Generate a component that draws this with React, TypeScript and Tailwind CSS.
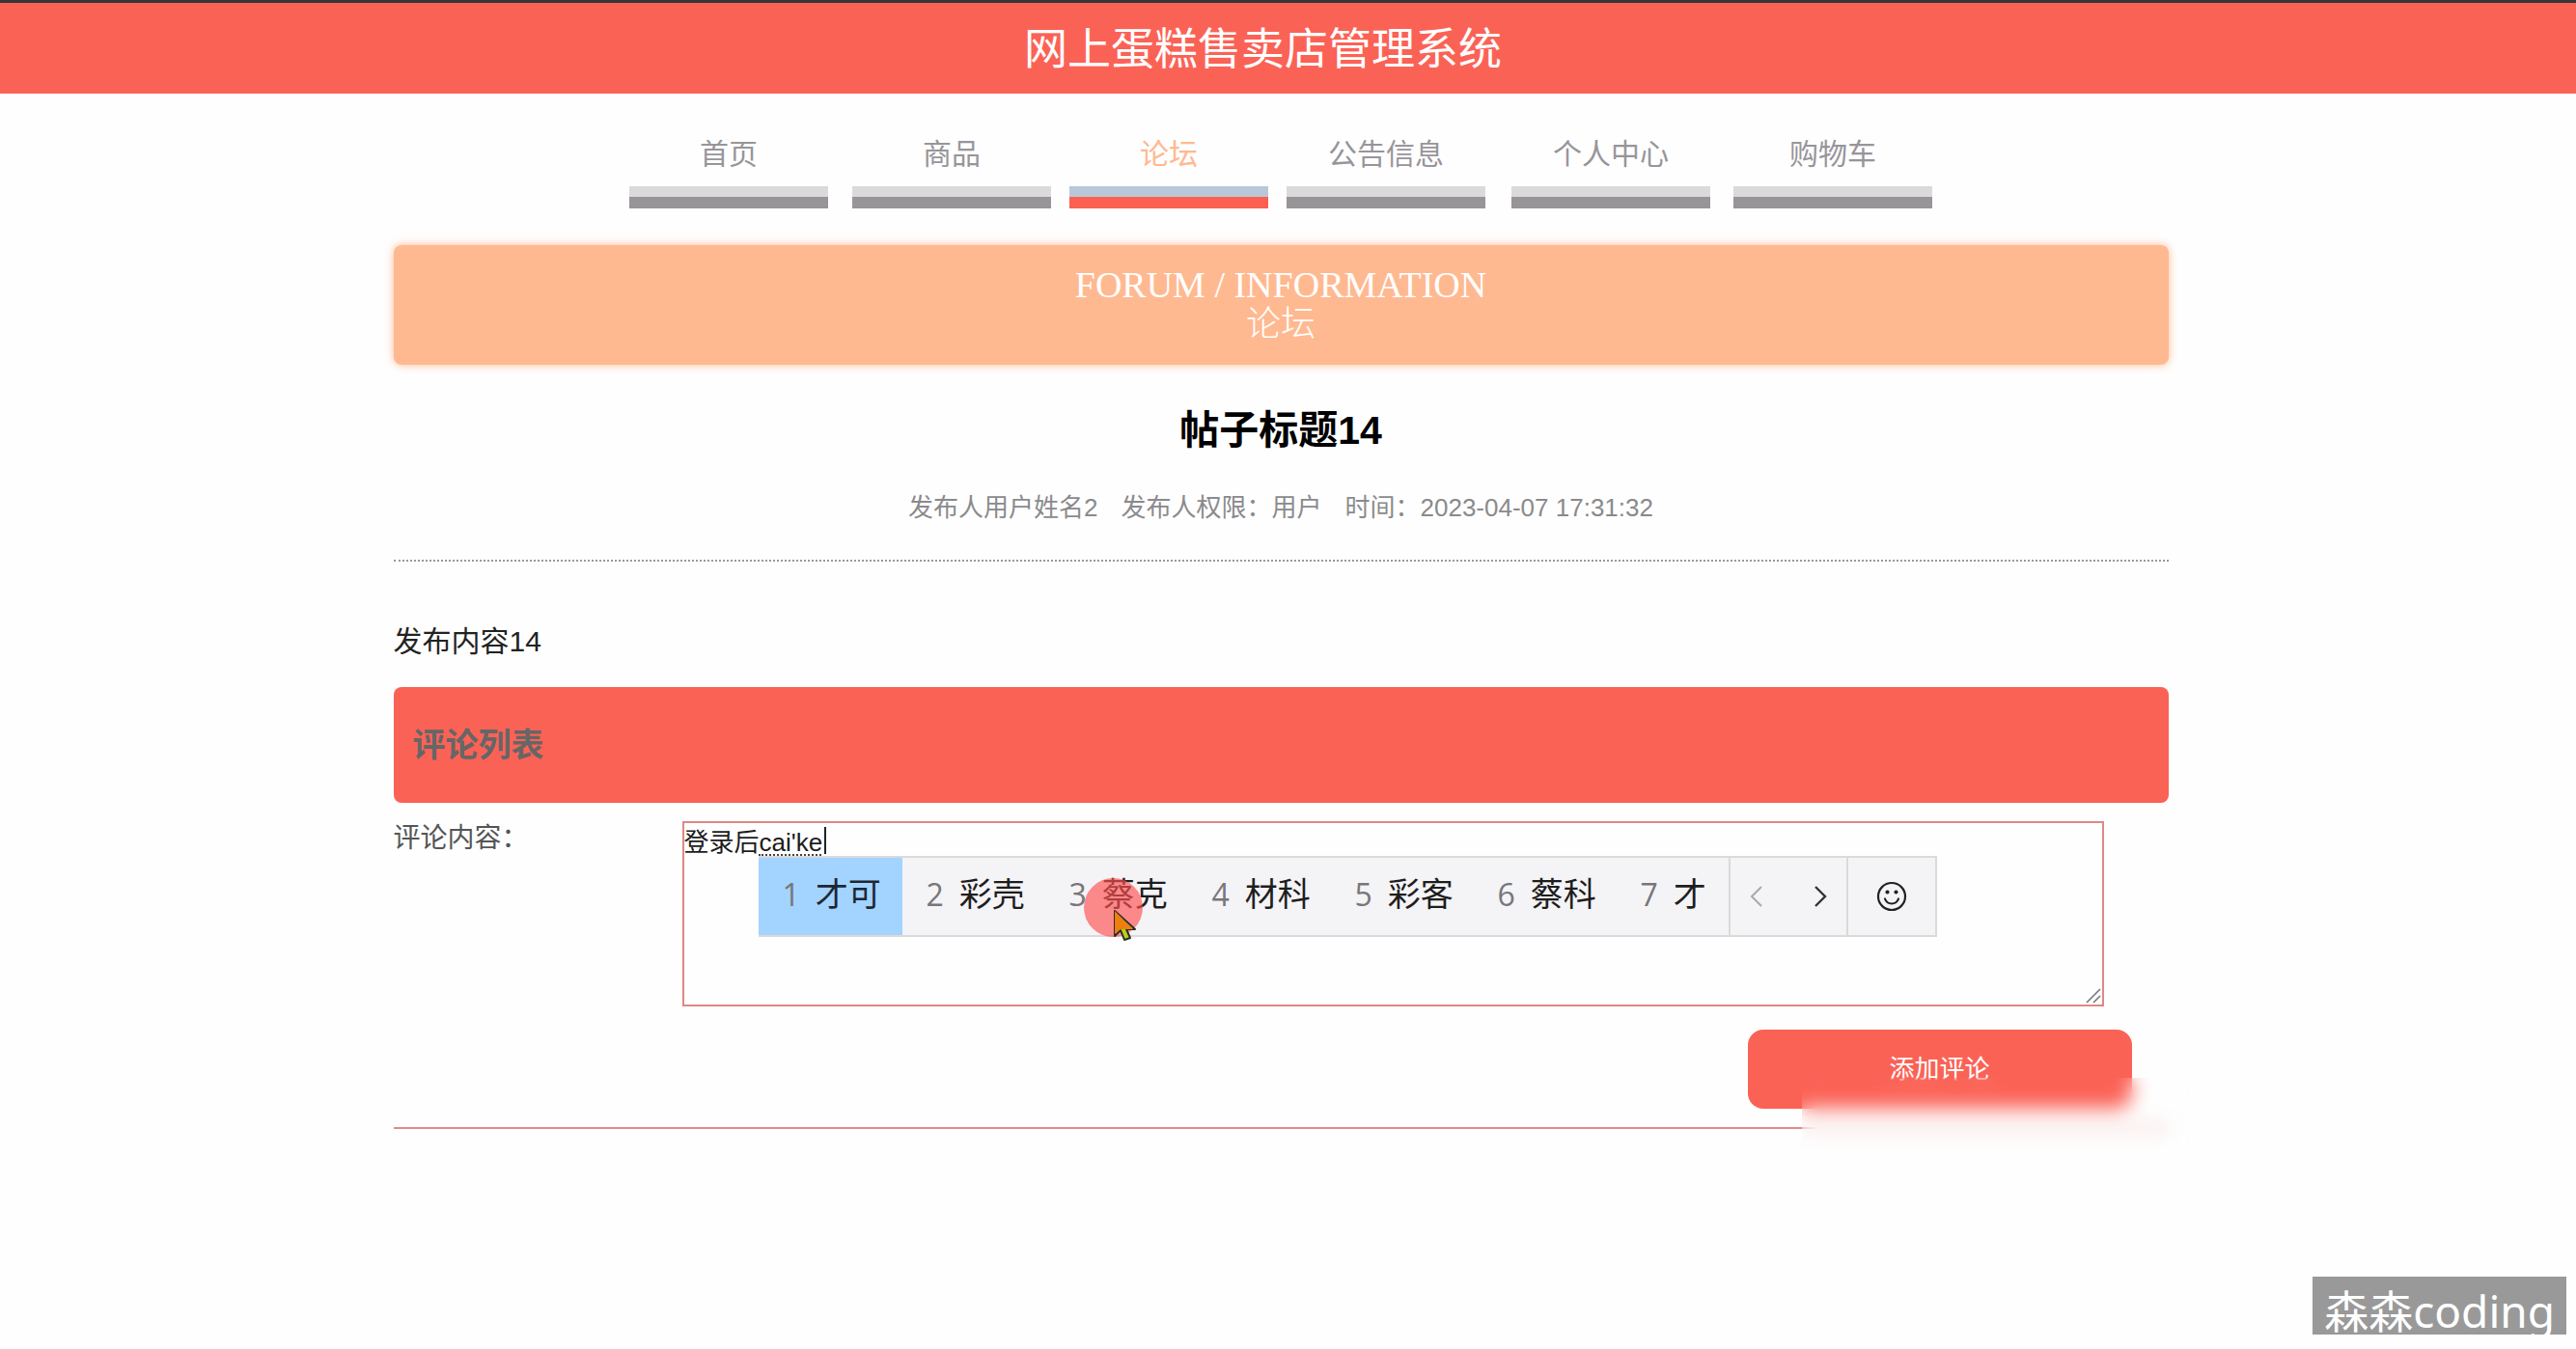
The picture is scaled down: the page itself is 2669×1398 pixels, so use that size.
const NAV = [
  { label: "首页", active: false },
  { label: "商品", active: false },
  { label: "论坛", active: true },
  { label: "公告信息", active: false },
  { label: "个人中心", active: false },
  { label: "购物车", active: false },
];

const CANDIDATES = ["才可", "彩壳", "蔡克", "材科", "彩客", "蔡科", "才"];

function Header() {
  return (
    <header className="border-t-[3px] border-[#38343a] bg-[#fb6256] pt-1 pr-[52px]">
      <h1 className="text-center text-[45px] leading-[90px] text-white">网上蛋糕售卖店管理系统</h1>
    </header>
  );
}

function Nav() {
  return (
    <nav className="grid grid-cols-[231px_225px_225px_233px_230px_206px] justify-center pt-10">
      {NAV.map((item) => (
        <a key={item.label} href="#" className="block w-[206px] text-center">
          <span
            className={
              item.active
                ? "block h-14 text-[30px] leading-[46px] text-[#ffb991]"
                : "block h-14 text-[30px] leading-[46px] text-[#97959a]"
            }
          >
            {item.label}
          </span>
          <span className={item.active ? "block h-[11px] bg-[#b9c8d8]" : "block h-[11px] bg-[#dcd9db]"} />
          <span className={item.active ? "block h-3 bg-[#fb6053]" : "block h-3 bg-[#979597]"} />
        </a>
      ))}
    </nav>
  );
}

function Smiley() {
  return (
    <svg viewBox="0 0 32 32" className="size-8" fill="none" stroke="#222" strokeWidth="2.2" strokeLinecap="round">
      <circle cx="16" cy="16" r="14" />
      <path d="M9 18.500c1.300 3.600 3.800 5 7 5s5.700-1.400 7-5" />
      <circle cx="11.500" cy="11.500" r="1" fill="#222" />
      <circle cx="20.500" cy="11.500" r="1" fill="#222" />
    </svg>
  );
}

function Pointer() {
  return (
    <div className="absolute top-[21px] left-[337px] size-[61px] rounded-full bg-[#ff5050]/65">
      <svg viewBox="0 0 26 36" className="absolute top-[32px] left-[30px] h-9 w-[26px]">
        <path d="M2 2v26l6-6 4 10 6-2-4-9h9z" fill="#b5d516" stroke="#2c2c2c" strokeWidth="2" strokeLinejoin="round" />
        <path d="M2 2v24l6-5h13z" fill="#ee7f0e" />
      </svg>
    </div>
  );
}

function CandidateWindow() {
  return (
    <div className="absolute top-9 left-[79px] flex h-[84px] border-y-2 border-r-2 border-[#dadadb] bg-[#f4f3f6] text-[34px] leading-none">
      <ol className="flex w-[1005px]">
        {CANDIDATES.map((word, i) => (
          <li
            key={word}
            className={
              i === 0
                ? "flex w-[149px] shrink-0 items-center gap-4 bg-[#a3d3ff] pb-1 pl-[25px] text-[#1c2733]"
                : i === 6
                  ? "flex w-[116px] shrink-0 items-center gap-4 pb-1 pl-[25px] text-[#1e1e1e]"
                  : "flex w-[148px] shrink-0 items-center gap-4 pb-1 pl-[25px] text-[#1e1e1e]"
            }
          >
            <span className="font-['Open_Sans',sans-serif] text-[32px] text-[#77777a]">{i + 1}</span>
            <span>{word}</span>
          </li>
        ))}
      </ol>
      <div className="flex w-[122px] items-center justify-between border-l-2 border-[#dadadb] px-5">
        <button type="button" aria-label="上一页">
          <svg viewBox="0 0 14 24" className="h-6 w-3.5" fill="none" stroke="#a9a9ab" strokeWidth="2">
            <path d="M12 2L2 12l10 10" />
          </svg>
        </button>
        <button type="button" aria-label="下一页">
          <svg viewBox="0 0 14 24" className="h-6 w-3.5" fill="none" stroke="#333" strokeWidth="2.4">
            <path d="M2 2l10 10L2 22" />
          </svg>
        </button>
      </div>
      <button type="button" aria-label="表情" className="flex w-[92px] items-center justify-center border-l-2 border-[#dadadb]">
        <Smiley />
      </button>
      <Pointer />
    </div>
  );
}

function CommentForm() {
  return (
    <form className="relative flex flex-col border-b-2 border-[#e28a86] pt-[19px] pb-[19px]">
      <div className="flex items-start">
        <label htmlFor="comment" className="w-[299px] text-[28px] leading-9 text-[#555]">
          评论内容：
        </label>
        <div className="relative mr-[67px] flex-1">
          <textarea
            id="comment"
            defaultValue="登录后cai'ke"
            className="block h-[192px] w-full resize-none rounded-none border-2 border-[#dc8985] bg-transparent text-[26px] leading-10 text-[#1c1c1c] outline-none"
          />
          <span className="absolute top-[34px] left-[79px] w-[65px] border-b-2 border-dotted border-[#444]" />
          <span className="absolute top-1.5 left-[147px] h-7 w-0.5 bg-[#222]" />
          <svg
            viewBox="0 0 16 16"
            className="absolute right-[3px] bottom-[3px] size-4"
            fill="none"
            stroke="#777"
            strokeWidth="1.6"
          >
            <path d="M1 15L15 1M8 15l7-7" />
          </svg>
          <CandidateWindow />
        </div>
      </div>
      <button
        type="button"
        className="mt-6 mr-[38px] h-[82px] w-[398px] self-end rounded-2xl bg-[#fb6256] text-[26px] text-white"
      >
        添加评论
      </button>
      <div className="absolute -right-5 -bottom-6 h-[75px] w-[400px] backdrop-blur-[10px]" />
    </form>
  );
}

export default function App() {
  return (
    <div className="relative min-h-screen bg-[#fefefe] font-['Liberation_Sans','Noto_Sans_CJK_SC',sans-serif]">
      <Header />
      <div className="pr-[15px]">
        <Nav />
        <main className="mx-auto mt-[38px] w-[1839px] max-w-full">
          <div className="rounded-lg bg-[#ffb991] py-[21px] text-center font-['Liberation_Serif','Noto_Sans_CJK_SC',serif] text-[38px] leading-[41px] text-white shadow-[0_0_10px_#ffb991]">
            <p>FORUM / INFORMATION</p>
            <p className="text-4xl leading-[41px] font-light">论坛</p>
          </div>
          <h2 className="mt-[38px] text-center text-[41px] leading-[60px] font-bold text-black">帖子标题14</h2>
          <p className="flex justify-center gap-6 border-b-2 border-dotted border-[#999] pt-[30px] pb-[34px] text-[26px] leading-10 text-[#8a8a8c]">
            <span>发布人用户姓名2</span>
            <span>发布人权限：用户</span>
            <span>时间：2023-04-07 17:31:32</span>
          </p>
          <p className="pt-[60px] text-[30px] leading-[46px] text-[#222]">发布内容14</p>
          <h3 className="mt-6 rounded-lg bg-[#fb6256] pl-5 text-[34px] leading-[120px] font-bold text-[#666]">评论列表</h3>
          <CommentForm />
        </main>
      </div>
      <div className="absolute right-2.5 bottom-[15px] h-[60px] bg-[#999] px-3 font-['Noto_Sans','Noto_Sans_CJK_SC',sans-serif] text-[46px] leading-[70px] text-white">
        森森coding
      </div>
    </div>
  );
}
